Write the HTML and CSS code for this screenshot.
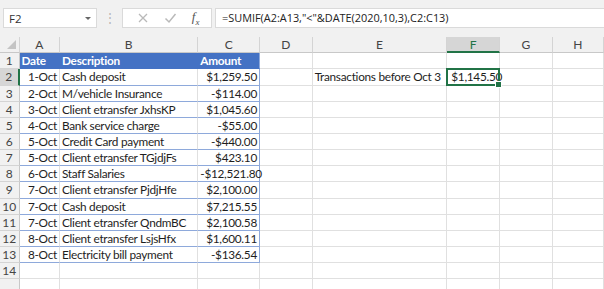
FILE: index.html
```html
<!DOCTYPE html>
<html lang="en">
<head>
    <meta charset="UTF-8">
    <title>SUMIF before date</title>
    <link rel="stylesheet" href="styles.css">
</head>
<body>
    <!-- Name box and formula bar -->
    <div class="toolbar">
        <div class="name-box">
            <span>F2</span>
            <span class="caret"></span>
        </div>
        <div class="grip">&#8942;</div>
        <div class="fx-box">
            <svg width="12" height="12" viewBox="0 0 12 12"><path d="M2 2 L10 10 M10 2 L2 10" stroke="#b9b9b9" stroke-width="1.3" fill="none"/></svg>
            <svg width="13" height="12" viewBox="0 0 13 12"><path d="M1.5 6.5 L5 10 L11.5 2" stroke="#b9b9b9" stroke-width="1.5" fill="none"/></svg>
            <span class="fx">f<sub>x</sub></span>
        </div>
        <div class="formula">=SUMIF(A2:A13,"&lt;"&amp;DATE(2020,10,3),C2:C13)</div>
    </div>

    <!-- Sheet -->
    <div class="sheet">
        <div class="hd corner"><span class="tri"></span></div>
        <div class="hd">A</div>
        <div class="hd">B</div>
        <div class="hd">C</div>
        <div class="hd">D</div>
        <div class="hd">E</div>
        <div class="hd active">F</div>
        <div class="hd">G</div>
        <div class="hd">H</div>

        <div class="rn">1</div>
        <div class="c th">Date</div>
        <div class="c th">Description</div>
        <div class="c th last">Amount</div>
        <div class="c"></div><div class="c"></div><div class="c"></div><div class="c"></div><div class="c"></div>

        <div class="rn active">2</div>
        <div class="c td num">1-Oct</div>
        <div class="c td">Cash deposit</div>
        <div class="c td num last">$1,259.50</div>
        <div class="c"></div>
        <div class="c">Transactions before Oct 3</div>
        <div class="c sel">$1,145.50</div>
        <div class="c"></div><div class="c"></div>

        <div class="rn">3</div>
        <div class="c td num">2-Oct</div>
        <div class="c td">M/vehicle Insurance</div>
        <div class="c td num last">-$114.00</div>
        <div class="c"></div><div class="c"></div><div class="c"></div><div class="c"></div><div class="c"></div>

        <div class="rn">4</div>
        <div class="c td num">3-Oct</div>
        <div class="c td">Client etransfer JxhsKP</div>
        <div class="c td num last">$1,045.60</div>
        <div class="c"></div><div class="c"></div><div class="c"></div><div class="c"></div><div class="c"></div>

        <div class="rn">5</div>
        <div class="c td num">4-Oct</div>
        <div class="c td">Bank service charge</div>
        <div class="c td num last">-$55.00</div>
        <div class="c"></div><div class="c"></div><div class="c"></div><div class="c"></div><div class="c"></div>

        <div class="rn">6</div>
        <div class="c td num">5-Oct</div>
        <div class="c td">Credit Card payment</div>
        <div class="c td num last">-$440.00</div>
        <div class="c"></div><div class="c"></div><div class="c"></div><div class="c"></div><div class="c"></div>

        <div class="rn">7</div>
        <div class="c td num">5-Oct</div>
        <div class="c td">Client etransfer TGjdjFs</div>
        <div class="c td num last">$423.10</div>
        <div class="c"></div><div class="c"></div><div class="c"></div><div class="c"></div><div class="c"></div>

        <div class="rn">8</div>
        <div class="c td num">6-Oct</div>
        <div class="c td">Staff Salaries</div>
        <div class="c td num last">-$12,521.80</div>
        <div class="c"></div><div class="c"></div><div class="c"></div><div class="c"></div><div class="c"></div>

        <div class="rn">9</div>
        <div class="c td num">7-Oct</div>
        <div class="c td">Client etransfer PjdjHfe</div>
        <div class="c td num last">$2,100.00</div>
        <div class="c"></div><div class="c"></div><div class="c"></div><div class="c"></div><div class="c"></div>

        <div class="rn">10</div>
        <div class="c td num">7-Oct</div>
        <div class="c td">Cash deposit</div>
        <div class="c td num last">$7,215.55</div>
        <div class="c"></div><div class="c"></div><div class="c"></div><div class="c"></div><div class="c"></div>

        <div class="rn">11</div>
        <div class="c td num">7-Oct</div>
        <div class="c td">Client etransfer QndmBC</div>
        <div class="c td num last">$2,100.58</div>
        <div class="c"></div><div class="c"></div><div class="c"></div><div class="c"></div><div class="c"></div>

        <div class="rn">12</div>
        <div class="c td num">8-Oct</div>
        <div class="c td">Client etransfer LsjsHfx</div>
        <div class="c td num last">$1,600.11</div>
        <div class="c"></div><div class="c"></div><div class="c"></div><div class="c"></div><div class="c"></div>

        <div class="rn">13</div>
        <div class="c td num">8-Oct</div>
        <div class="c td">Electricity bill payment</div>
        <div class="c td num last">-$136.54</div>
        <div class="c"></div><div class="c"></div><div class="c"></div><div class="c"></div><div class="c"></div>

        <div class="rn">14</div>
        <div class="c"></div><div class="c"></div><div class="c"></div><div class="c"></div><div class="c"></div><div class="c"></div><div class="c"></div><div class="c"></div>

        <div class="rn"></div>
        <div class="c"></div><div class="c"></div><div class="c"></div><div class="c"></div><div class="c"></div><div class="c"></div><div class="c"></div><div class="c"></div>
    </div>
</body>
</html>
```

FILE: styles.css
```css
body {
    margin: 0;
    width: 604px;
    height: 289px;
    overflow: hidden;
    background: #ffffff;
    font-family: 'Lato', 'Liberation Sans', sans-serif;
    color: #1e1e1e;
}

/* Formula bar */
.toolbar {
    height: 37px;
    box-sizing: border-box;
    padding: 8px 0 0 3px;
    background: #f1f1f1;
    display: flex;
    align-items: flex-start;
    font-family: 'Open Sans', 'Liberation Sans', sans-serif;
    font-size: 10.9px;
}

.name-box, .fx-box, .formula {
    height: 20px;
    box-sizing: border-box;
    background: #ffffff;
    border: 1px solid #dadada;
}

.name-box {
    width: 94px;
    display: flex;
    align-items: center;
    justify-content: space-between;
    padding: 0 5px 0 5px;
    color: #333;
    font-size: 11.5px;
}

.caret {
    width: 0;
    height: 0;
    border-left: 3px solid transparent;
    border-right: 3px solid transparent;
    border-top: 3px solid #666;
}

.grip {
    width: 25px;
    text-align: center;
    color: #b5b5b5;
    line-height: 20px;
    font-size: 12px;
}

.fx-box {
    width: 90px;
    display: flex;
    align-items: center;
    justify-content: space-around;
    padding: 0 4px 0 6px;
}

.fx {
    font-family: 'Liberation Serif', serif;
    font-style: italic;
    font-size: 13px;
    color: #555;
}

.fx sub {
    font-size: 9px;
}

.formula {
    flex: 1;
    margin-left: 3px;
    border-right: none;
    padding-left: 6px;
    line-height: 18px;
    color: #222;
    white-space: nowrap;
}

/* Sheet grid */
.sheet {
    display: grid;
    grid-template-columns: 19.5px 40.5px 138.3px 61.7px 52.7px 134.6px 52.7px 52.7px 1fr;
    grid-template-rows: 16.3px repeat(15, 16.15px);
    font-size: 11.8px;
    letter-spacing: -0.28px;
}

.hd {
    background: #f1f1f1;
    border-right: 1px solid #d4d4d4;
    border-bottom: 1px solid #c8c8c8;
    color: #444;
    text-align: center;
    line-height: 15px;
    font-size: 12px;
    letter-spacing: 0;
    box-sizing: border-box;
}

.hd.active {
    background: #d6d6d6;
    color: #217346;
    border-bottom: 2px solid #217346;
}

.corner {
    position: relative;
}

.tri {
    position: absolute;
    right: 3px;
    bottom: 3px;
    width: 0;
    height: 0;
    border-left: 9px solid transparent;
    border-bottom: 9px solid #c4c4c4;
}

.rn {
    background: #f1f1f1;
    border-right: 1px solid #c8c8c8;
    border-bottom: 1px solid #d4d4d4;
    color: #444;
    text-align: center;
    font-size: 12px;
    letter-spacing: 0;
    line-height: 16px;
    box-sizing: border-box;
}

.rn.active {
    background: #d6d6d6;
    border-right: 2px solid #217346;
}

.c {
    border-right: 1px solid #e0e0e0;
    border-bottom: 1px solid #e0e0e0;
    box-sizing: border-box;
    padding: 0 2px;
    line-height: 16px;
    white-space: nowrap;
    overflow: visible;
}

.th {
    background: #4472c4;
    color: #ffffff;
    font-weight: bold;
    border-right-color: #4472c4;
    border-bottom: 1px solid #4472c4;
}

.td {
    border-bottom: 1px solid #8ea9db;
}

.num {
    text-align: right;
}

.last {
    border-right: 1px solid #8ea9db;
}

.sel {
    position: relative;
    padding-left: 4px;
}

.sel::after {
    content: "";
    position: absolute;
    left: -1px;
    top: -1px;
    right: -1px;
    bottom: -1px;
    border: 2px solid #217346;
}

.sel::before {
    content: "";
    position: absolute;
    right: -3px;
    bottom: -3px;
    width: 5px;
    height: 5px;
    background: #217346;
    border: 1px solid #fff;
    z-index: 1;
}
```
